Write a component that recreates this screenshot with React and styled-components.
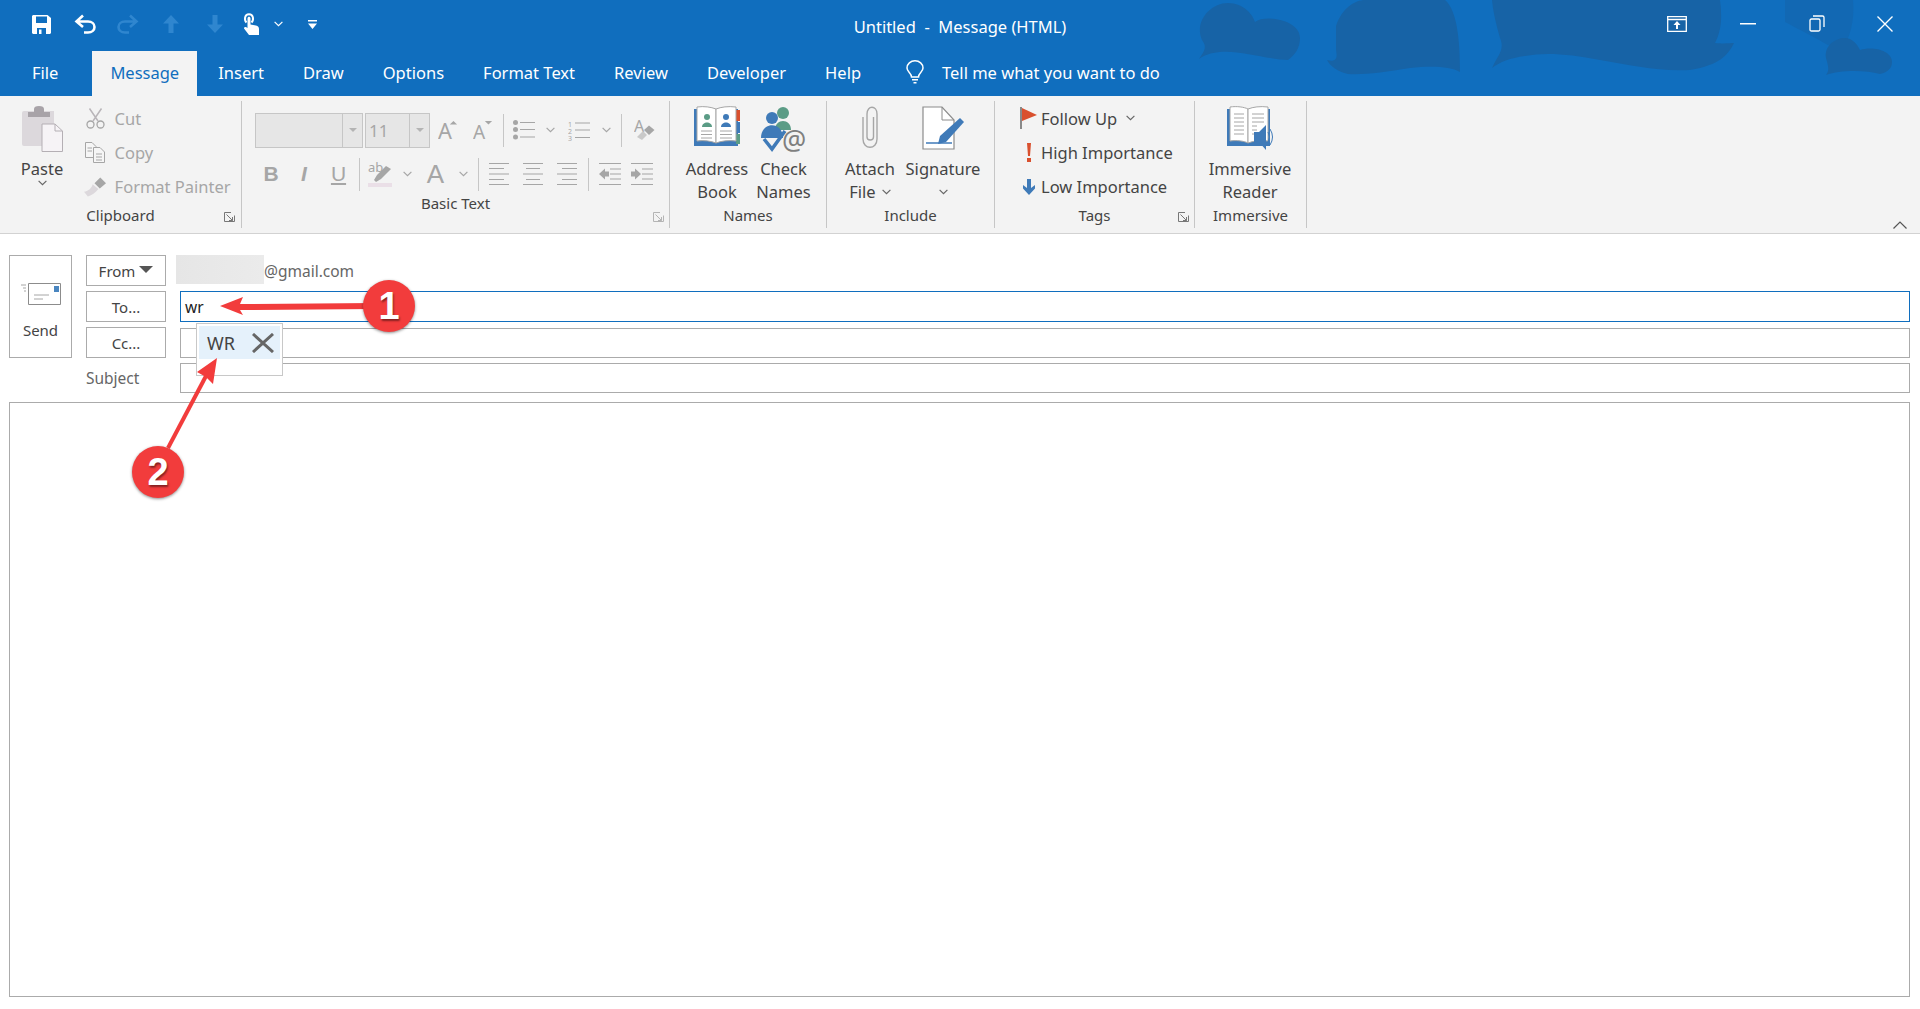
import styled, { createGlobalStyle } from "styled-components";

const GlobalStyle = createGlobalStyle`
  html, body { margin: 0; padding: 0; height: 100%; }
  body { font-family: "Noto Sans", "Open Sans", sans-serif; background: #fff; color: #333; overflow: hidden; }
  #root { height: 100%; }
`;

const Window = styled.div`
  position: relative;
  display: flex;
  flex-direction: column;
  height: 1009px;
  width: 1920px;
  overflow: hidden;
`;

const Header = styled.header`
  position: relative;
  height: 96px;
  background: #106ebe;
  color: #fff;
  flex: none;
`;

const Clouds = styled.svg`
  position: absolute;
  top: 0;
  right: 0;
`;

const TitleRow = styled.div`
  position: relative;
  height: 51px;
  display: grid;
  grid-template-columns: 1fr auto 1fr;
  align-items: center;
`;

const Qat = styled.div`
  display: flex;
  align-items: center;
  padding-left: 32px;
  margin-top: -3px;
`;

const QatSlot = styled.span`
  display: inline-flex;
  justify-content: flex-start;
  width: ${(p) => p.$w}px;
`;

const Title = styled.div`
  font-size: 16.5px;
  white-space: pre;
  margin-top: 1px;
`;

const WinButtons = styled.div`
  display: flex;
  justify-content: flex-end;
  align-items: center;
  padding-right: 27px;
  margin-top: -4px;
`;

const WinSlot = styled.span`
  display: inline-flex;
  justify-content: flex-end;
  width: ${(p) => p.$w}px;
`;

const TabRow = styled.nav`
  position: relative;
  display: flex;
  align-items: stretch;
  height: 45px;
  padding-left: 14px;
  gap: 3px;
`;

const Tab = styled.div`
  display: flex;
  align-items: center;
  padding: 0 18px 3px;
  font-size: 16.5px;
  margin-right: ${(p) => p.$mr || 0}px;
  background: ${(p) => (p.$active ? "#f3f3f3" : "transparent")};
  color: ${(p) => (p.$active ? "#106ebe" : "#fff")};
`;

const TellMe = styled.div`
  display: flex;
  align-items: center;
  gap: 17px;
  font-size: 16.5px;
  padding: 0 0 3px 23px;
`;

const Ribbon = styled.section`
  position: relative;
  display: flex;
  flex: none;
  height: 138px;
  padding-top: 5px;
  box-sizing: border-box;
  background: #f3f3f3;
  border-bottom: 1px solid #d2d2d2;
`;

const Group = styled.div`
  position: relative;
  width: ${(p) => p.$w}px;
  box-sizing: border-box;
  height: 127px;
  display: flex;
  flex-direction: column;
  border-right: 1px solid #c6c6c6;
`;

const GroupBody = styled.div`
  flex: 1;
  display: flex;
  padding: ${(p) => p.$pad || "0"};
  min-height: 0;
`;

const GroupLabel = styled.div`
  height: 24px;
  line-height: 22px;
  text-align: center;
  font-size: 15px;
  color: #444;
`;

const Launcher = styled.svg`
  position: absolute;
  right: ${(p) => p.$r || 5}px;
  bottom: 1px;
`;

const LargeButton = styled.div`
  width: ${(p) => p.$w}px;
  display: flex;
  flex-direction: column;
  align-items: center;
  padding-top: 5px;
  font-size: 16.5px;
  line-height: 23px;
  color: #444;
`;

const LargeIcon = styled.div`
  height: 50px;
  margin-bottom: 1px;
  display: flex;
  align-items: flex-start;
`;

const Caption = styled.span`
  display: inline-flex;
  align-items: center;
  gap: 6px;
  white-space: nowrap;
`;

const SmallColumn = styled.div`
  display: flex;
  flex-direction: column;
  padding-left: ${(p) => p.$pl || 0}px;
`;

const SmallButton = styled.div`
  height: 35px;
  display: flex;
  align-items: center;
  font-size: 16.5px;
  white-space: nowrap;
  color: ${(p) => (p.$off ? "#a6a6a6" : "#444")};
`;

const SmallIcon = styled.span`
  display: inline-flex;
  justify-content: center;
  width: ${(p) => p.$w}px;
  flex: none;
`;

const TextRows = styled.div`
  display: flex;
  flex-direction: column;
  gap: 8px;
  padding: 11px 0 0 13px;
`;

const ToolRow = styled.div`
  display: flex;
  align-items: center;
  height: 36px;
`;

const Tool = styled.span`
  display: inline-flex;
  align-items: center;
  justify-content: center;
  width: ${(p) => p.$w}px;
  height: 100%;
  color: #a6a6a6;
`;

const ToolSep = styled.span`
  display: block;
  width: 1px;
  height: 33px;
  background: #c6c6c6;
`;

const Combo = styled.div`
  display: flex;
  box-sizing: border-box;
  width: ${(p) => p.$w}px;
  height: 35px;
  margin-right: ${(p) => p.$mr || 0}px;
  background: #e6e6e6;
  border: 1px solid #c6c6c6;
  color: #a6a6a6;
  font-size: 17px;
`;

const ComboValue = styled.span`
  flex: 1;
  padding-left: 3px;
  line-height: 33px;
`;

const ComboArrow = styled.span`
  width: 19px;
  display: flex;
  align-items: center;
  justify-content: center;
  border-left: 1px solid #c6c6c6;
  &::after {
    content: "";
    border: 4px solid transparent;
    border-top: 4px solid #b4b4b4;
    margin-top: 4px;
  }
`;

const Collapse = styled.svg`
  position: absolute;
  right: 13px;
  bottom: 4px;
`;

const Compose = styled.main`
  flex: 1;
  display: flex;
  flex-direction: column;
  padding: 21px 10px 12px 9px;
  min-height: 0;
  background: #fff;
  position: relative;
`;

const Fields = styled.div`
  display: grid;
  grid-template-columns: 63px 80px 1fr;
  grid-template-rows: 31px 31px 31px 30px;
  column-gap: 14px;
  row-gap: 5px;
`;

const SendButton = styled.div`
  grid-row: 1 / span 3;
  box-sizing: border-box;
  border: 1px solid #ababab;
  display: flex;
  flex-direction: column;
  align-items: center;
  padding-top: 27px;
  gap: 15px;
  font-size: 15px;
  color: #444;
`;

const FieldButton = styled.div`
  box-sizing: border-box;
  border: 1px solid #ababab;
  display: flex;
  align-items: center;
  justify-content: center;
  gap: 4px;
  font-size: 15px;
  color: #444;
`;

const FromCaret = styled.span`
  width: 0;
  height: 0;
  margin-top: -3px;
  border: 7px solid transparent;
  border-bottom: none;
  border-top: 7px solid #555;
`;

const FromValue = styled.div`
  display: flex;
  align-items: center;
  margin-left: -4px;
  font-size: 15.5px;
  color: #666;
`;

const Redacted = styled.span`
  width: 88px;
  height: 29px;
  margin-top: -2px;
  background: linear-gradient(90deg, #e6e6e6, #ebebeb);
`;

const Input = styled.div`
  box-sizing: border-box;
  margin-top: ${(p) => p.$mt || 0}px;
  border: 1px solid ${(p) => (p.$focus ? "#106ebe" : "#ababab")};
  display: flex;
  align-items: center;
  padding-left: 4px;
  font-size: 15.5px;
  color: #222;
`;

const SubjectLabel = styled.div`
  display: flex;
  align-items: center;
  font-size: 15.5px;
  color: #666;
`;

const Body = styled.div`
  flex: 1;
  margin-top: 9px;
  border: 1px solid #ababab;
`;

const Suggest = styled.div`
  position: absolute;
  left: 196px;
  top: 89px;
  box-sizing: border-box;
  width: 87px;
  height: 53px;
  padding: 2px;
  background: #fff;
  border: 1px solid #c8c8c8;
`;

const SuggestRow = styled.div`
  height: 33px;
  display: flex;
  align-items: center;
  justify-content: space-between;
  padding: 0 6px 0 8px;
  background: #e5f1fb;
  font-size: 18px;
  color: #444;
`;

const Annotations = styled.svg`
  position: absolute;
  left: 0;
  top: 0;
  pointer-events: none;
`;

const Badge = styled.div`
  position: absolute;
  left: ${(p) => p.$x - 26}px;
  top: ${(p) => p.$y - 26}px;
  width: 52px;
  height: 52px;
  border-radius: 50%;
  background: #f23c3c;
  box-shadow: 0 1px 3px rgba(0, 0, 0, 0.45);
  color: #fff;
  font: bold 38px/52px "Liberation Sans", sans-serif;
  text-align: center;
  text-shadow: 1px 2px 2px rgba(0, 0, 0, 0.45);
`;

const SaveIcon = () => (
  <svg width="19" height="19" viewBox="0 0 19 19">
    <path fill="#fff" d="M0 1 1 0H15.500L19 3V18L18 19H1L0 18Z" />
    <path fill="#106ebe" d="M4 1.500H15V8H4ZM5 13H14V19H5Z" />
    <path fill="#fff" d="M7 14.500H9.500V19H7Z" />
  </svg>
);

const UndoIcon = ({ color = "#fff", flip }) => (
  <svg width="22" height="20" viewBox="0 0 22 20" style={flip ? { transform: "scaleX(-1)" } : undefined}>
    <path fill="none" stroke={color} strokeWidth="2.6" d="M9 1.500 2.500 7.500 9 13M2.500 7.500H14C18 7.500 20.500 10 20.500 13S18 18.500 14 18.500H10" />
  </svg>
);

const ArrowIcon = ({ down }) => (
  <svg width="16" height="18" viewBox="0 0 16 18" style={down ? { transform: "scaleY(-1)" } : undefined}>
    <path fill="#2f86cf" d="M8 0 16 8.500H10.500V18H5.500V8.500H0Z" />
  </svg>
);

const TouchIcon = () => (
  <svg width="16" height="22" viewBox="0 0 16 22">
    <path fill="none" stroke="#fff" strokeWidth="2" d="M3.500 9.500C1 7 1.500 1.200 6 1.200S11 7 8.500 9.500" />
    <path fill="#fff" d="M4.500 5.500C4.500 3.300 7.500 3.300 7.500 5.500V11.500L13 12.500C15 13 16 14 16 16V22H6L1 15.500C1 13.500 3 13.500 4.500 15Z" />
  </svg>
);

const Chevron = ({ color = "#666", w = 9 }) => (
  <svg width={w} height="6" viewBox="0 0 9 6">
    <path fill="none" stroke={color} strokeWidth="1.200" d="M.6.8 4.500 4.700 8.400.8" />
  </svg>
);

const CustomizeIcon = () => (
  <svg width="9" height="9" viewBox="0 0 9 9">
    <path fill="#fff" d="M0 0H9V1.500H0ZM0 3.500H9L4.500 9Z" />
  </svg>
);

const PinRibbonIcon = () => (
  <svg width="20" height="16" viewBox="0 0 20 16">
    <path fill="none" stroke="#fff" strokeWidth="1.300" d="M.7.7H19.300V15.300H.7ZM.7 3.500H19.300" />
    <path fill="#fff" d="M10 5 13.500 9H11V13H9V9H6.500Z" />
  </svg>
);

const MinimizeIcon = () => (
  <svg width="16" height="2" viewBox="0 0 16 2">
    <path fill="#fff" d="M0 0H16V1.500H0Z" />
  </svg>
);

const RestoreIcon = () => (
  <svg width="16" height="17" viewBox="0 0 16 17">
    <path fill="none" stroke="#fff" strokeWidth="1.300" d="M1 5.500Q1 4 2.500 4H9.500Q11 4 11 5.500V14.500Q11 16 9.500 16H2.500Q1 16 1 14.500ZM4 1H13.500Q15 1 15 2.500V12" />
  </svg>
);

const CloseIcon = () => (
  <svg width="16" height="16" viewBox="0 0 16 16">
    <path stroke="#fff" strokeWidth="1.400" d="M.5.5 15.500 15.500M15.500.5.5 15.500" />
  </svg>
);

const BulbIcon = () => (
  <svg width="20" height="24" viewBox="0 0 20 24">
    <path fill="none" stroke="#fff" strokeWidth="1.500" d="M6.500 17C6.500 13 2 12 2 8A8 7.200 0 0 1 18 8C18 12 13.500 13 13.500 17ZM7 19.800H13M8.500 22.800H11.500" />
  </svg>
);

const PasteIcon = () => (
  <svg width="41" height="46" viewBox="0 0 41 46">
    <path fill="#dcd8dc" d="M2 5H32V40H2Q0 40 0 38V7Q0 5 2 5Z" />
    <path fill="#a8a3a8" d="M6 6 12 6V3Q12 0 17 0T22 3V6H28V11H6Z" />
    <path fill="#f6f3f6" stroke="#b4afb4" d="M20 18H33L40.500 25V45.500H20Z" />
    <path fill="none" stroke="#b4afb4" d="M33 18V25H40.500" />
  </svg>
);

const CutIcon = () => (
  <svg width="19" height="21" viewBox="0 0 19 21">
    <path fill="none" stroke="#b9b5b9" strokeWidth="1.500" d="M3.500.5 12 13M15.500.5 7 13" />
    <circle cx="4.500" cy="16.500" r="3.500" fill="none" stroke="#a6a6a6" strokeWidth="1.300" />
    <circle cx="14.500" cy="16.500" r="3.500" fill="none" stroke="#a6a6a6" strokeWidth="1.300" />
  </svg>
);

const CopyIcon = () => (
  <svg width="20" height="21" viewBox="0 0 20 21">
    <path fill="#f6f6f6" stroke="#a6a6a6" d="M.5.5H7L11 4.500V15.500H.5Z" />
    <path fill="#f6f6f6" stroke="#a6a6a6" d="M8.500 5.500H15L19.500 10V20.500H8.500Z" />
    <path stroke="#a6a6a6" d="M2.500 6H7M2.500 9H7M11 12H17M11 15H17M11 18H17" />
  </svg>
);

const BrushIcon = () => (
  <svg width="23" height="20" viewBox="0 0 23 20">
    <path fill="#dcd8dc" d="M0 15C5 14 8 11 9 7L15 12C12 16 7 19 4 20Z" />
    <path fill="#a6a6a6" d="M11 6 17 0 23 6 16.500 11.500Z" />
  </svg>
);

const GrowFont = ({ size = 24, up = true, w = 20 }) => (
  <svg width={w} height="20" viewBox="0 0 22 22">
    <text x="0" y="21" fontFamily="Noto Sans" fontSize={size} fill="#a6a6a6">A</text>
    <path fill="#a6a6a6" d={up ? "M17 1 21 5H13Z" : "M13 1H21L17 5Z"} />
  </svg>
);

const BulletsIcon = () => (
  <svg width="22" height="20" viewBox="0 0 22 20">
    <circle cx="2.500" cy="2.500" r="2.500" fill="#a6a6a6" />
    <circle cx="2.500" cy="9.500" r="2.500" fill="#a6a6a6" />
    <circle cx="2.500" cy="17" r="2.500" fill="#a6a6a6" />
    <path stroke="#a6a6a6" strokeWidth="1.200" d="M7 2.500H22M7 9.500H22M7 17H22" />
  </svg>
);

const NumbersIcon = () => (
  <svg width="22" height="21" viewBox="0 0 22 21">
    <text x="0" y="6.500" fontSize="7" fontFamily="Noto Sans" fill="#a6a6a6">1</text>
    <text x="0" y="13.500" fontSize="7" fontFamily="Noto Sans" fill="#a6a6a6">2</text>
    <text x="0" y="20.500" fontSize="7" fontFamily="Noto Sans" fill="#a6a6a6">3</text>
    <path stroke="#a6a6a6" strokeWidth="1.200" d="M7 3H22M7 10H22M7 17.500H22" />
  </svg>
);

const ClearIcon = () => (
  <svg width="21" height="22" viewBox="0 0 21 22">
    <text x="0" y="13" fontSize="16" fontFamily="Noto Sans" fill="#a6a6a6">A</text>
    <path fill="#c9c9c9" d="M3 18 9 12 13 16 8 21Z" />
    <path fill="#a6a6a6" d="M10 11 15 6.500 20.500 11 15 16Z" />
  </svg>
);

const BoldGlyph = styled.span`
  font: ${(p) => (p.$i ? "italic" : "normal")} ${(p) => (p.$b ? 700 : 400)} ${(p) => p.$s || 21}px "Liberation Sans", sans-serif;
  text-decoration: ${(p) => (p.$u ? "underline" : "none")};
  text-underline-offset: 2px;
  color: #a6a6a6;
`;

const HighlightIcon = () => (
  <svg width="24" height="25" viewBox="0 0 24 25">
    <text x="0" y="10" fontSize="13" fontFamily="Noto Sans" fill="#a6a6a6">ab</text>
    <path fill="#a6a6a6" d="M6 18 9 13 18 4 23 7 13 17 8 20Z" />
    <path fill="#eadfe7" d="M0 21H24V25H0Z" />
  </svg>
);

const AlignIcon = ({ mode }) => {
  const short = { left: "M0 5.500H15M0 16.500H15", center: "M3 5.500H17M3 16.500H17", right: "M5 5.500H20M5 16.500H20" }[mode];
  return (
    <svg width="20" height="22" viewBox="0 0 20 22">
      <path stroke="#a6a6a6" strokeWidth="1.200" d="M0 .5H20M0 11H20M0 21.500H20" />
      <path stroke="#a6a6a6" strokeWidth="1.200" d={short} />
    </svg>
  );
};

const IndentIcon = ({ out }) => (
  <svg width="22" height="22" viewBox="0 0 22 22">
    <path stroke="#a6a6a6" strokeWidth="1.200" d="M0 .5H22M0 21.500H22M11 6H22M11 11H22M11 16H22" />
    <path fill="#a6a6a6" d={out ? "M0 11 6 5.500V8.500H10V13.500H6V16.500Z" : "M10 11 4 5.500V8.500H0V13.500H4V16.500Z"} />
  </svg>
);

const LauncherIcon = ({ color }) => (
  <svg width="11" height="10" viewBox="0 0 11 10">
    <path fill="none" stroke={color} d="M10.500 3.500V9.500H.5V.5H7M2.500 2.500 8.500 8.500M5 8.500H8.500V5" />
  </svg>
);

const BookIcon = () => (
  <svg width="46" height="40" viewBox="0 0 46 40">
    <path fill="#3f7ab8" d="M0 3H44V40H0Z" />
    <path fill="#d9502e" d="M42 4H46V15H42Z" />
    <path fill="#3f7ab8" d="M42 16H46V27H42Z" />
    <path fill="#5b9c86" d="M42 28H46V38H42Z" />
    <path fill="#fff" stroke="#a6a6a6" d="M3 1C10 0 17 1 22 3V37C17 35 10 34 3 35Z" />
    <path fill="#fff" stroke="#a6a6a6" d="M22 3C27 1 34 0 42 1V35C34 34 27 35 22 37Z" />
    <circle cx="13" cy="11" r="3" fill="#5b9c86" />
    <path fill="#5b9c86" d="M8 21C8 15 18 15 18 21Z" />
    <circle cx="32" cy="11" r="3" fill="#3f7ab8" />
    <path fill="#3f7ab8" d="M27 21C27 15 37 15 37 21Z" />
    <path stroke="#a6a6a6" d="M7 25H18M7 28.500H18M7 32H18M26 25H38M26 28.500H38M26 32H38" />
  </svg>
);

const CheckNamesIcon = () => (
  <svg width="46" height="46" viewBox="0 0 46 46">
    <circle cx="22" cy="7" r="6" fill="#5b9c86" />
    <path fill="#5b9c86" d="M14 24C14 12 30 12 30 24Z" />
    <circle cx="11" cy="12" r="6" fill="#3f7ab8" />
    <path fill="#3f7ab8" d="M0 32C0 15 22 15 22 32Z" />
    <path fill="none" stroke="#3f7ab8" strokeWidth="3.500" d="M3 33 11 43 24 25" />
    <text x="21" y="44" fontSize="27" fontFamily="Noto Sans" fill="#7f7f7f">@</text>
  </svg>
);

const ClipIcon = () => (
  <svg width="16" height="42" viewBox="0 0 16 42">
    <path fill="none" stroke="#a6a6a6" strokeWidth="1.400" d="M11.500 11V31C11.500 35 5 35 5 31V8C5 -1 15 -1 15 8V33C15 44 1 44 1 33V11" />
  </svg>
);

const SignatureIcon = () => (
  <svg width="42" height="44" viewBox="0 0 42 44">
    <path fill="#fff" stroke="#8c8c8c" strokeWidth="1.200" d="M1 1H20L32 14V43H1Z" />
    <path fill="none" stroke="#8c8c8c" d="M20 1V14H32" />
    <path fill="#3f7ab8" d="M38 12 42 16 24 36 16 38 18 30Z" />
    <path stroke="#3f7ab8" strokeWidth="1.500" d="M4 37H30" />
  </svg>
);

const ReaderIcon = () => (
  <svg width="47" height="44" viewBox="0 0 47 44">
    <path fill="#3f7ab8" d="M0 3H43V40H0Z" />
    <path fill="#fff" stroke="#a6a6a6" d="M3 1C10 0 17 1 21 3V37C17 35 10 34 3 35Z" />
    <path fill="#fff" stroke="#a6a6a6" d="M21 3C26 1 33 0 41 1V35C33 34 26 35 21 37Z" />
    <path stroke="#a6a6a6" d="M7 8H17M7 12H17M7 16H17M7 20H17M7 24H17M7 28H17M25 8H37M25 12H37M25 16H37M25 20H30M25 24H30M25 28H30" />
    <path fill="#3f7ab8" d="M27 26H32L39 19V44L32 36H27Z" />
    <path fill="none" stroke="#3f7ab8" d="M41 26Q44 31 41 36M43 23Q48 31 43 39" />
  </svg>
);

const FlagIcon = () => (
  <svg width="17" height="22" viewBox="0 0 17 22">
    <path stroke="#666" strokeWidth="1.500" d="M1 0V22" />
    <path fill="#d9502e" d="M2 1 17 8 2 14Z" />
  </svg>
);

const BangIcon = () => (
  <svg width="6" height="19" viewBox="0 0 6 19">
    <path fill="#d9502e" d="M1 0H5L4 13H2ZM1 15H5V19H1Z" />
  </svg>
);

const LowIcon = () => (
  <svg width="12" height="16" viewBox="0 0 12 16">
    <path fill="#3f7ab8" d="M4 0H8V9L12 6V9.500L6 16 0 9.500V6L4 9Z" />
  </svg>
);

const SendIcon = () => (
  <svg width="40" height="22" viewBox="0 0 40 22">
    <path fill="#fff" stroke="#8c8c8c" d="M7.500.5H39.500V21.500H7.500Z" />
    <path fill="#4a86c0" d="M33 3H38V9H33Z" />
    <path stroke="#a6a6a6" d="M0 2H5M2 5H5M3 8H5M13 12H28M13 16H22" />
  </svg>
);

const App = () => (
  <Window>
    <GlobalStyle />
    <Header>
      <Clouds width="760" height="96" viewBox="0 0 760 96">
        <path fill="#1268b3" d="M625 0H693C695 20 690 40 680 52 660 40 640 30 625 22Z" />
        <g fill="#1763a6">
          <path d="M39 59C45 50 47 47 42 40 34 22 50 3 68 3 84 3 93 15 95 22 105 14 140 20 140 38 140 48 135 55 128 60 110 60 80 50 60 52 50 53 45 55 39 59Z" />
          <path d="M176 26C182 8 195 0 205 0H285C297 10 300 40 300 72 290 66 270 66 250 68 225 72 205 75 188 74 178 72 170 66 167 60 175 62 178 60 176 50Z" />
          <path d="M332 68C338 55 345 50 340 38 335 20 333 10 332 0H560C562 15 562 30 555 43 565 44 570 43 574 43 568 55 560 65 530 70 500 72 470 65 440 60 410 54 385 52 365 56 350 58 340 62 332 68Z" />
          <path d="M666 75C670 70 668 66 666 58 664 46 675 38 685 38 692 38 697 44 700 50 712 46 732 50 732 62 732 68 728 72 720 74 705 70 680 70 666 75Z" />
        </g>
      </Clouds>
      <TitleRow>
        <Qat>
          <QatSlot $w={42}><SaveIcon /></QatSlot>
          <QatSlot $w={43}><UndoIcon /></QatSlot>
          <QatSlot $w={46}><UndoIcon color="#2f86cf" flip /></QatSlot>
          <QatSlot $w={44}><ArrowIcon /></QatSlot>
          <QatSlot $w={36}><ArrowIcon down /></QatSlot>
          <QatSlot $w={31}><TouchIcon /></QatSlot>
          <QatSlot $w={34}><Chevron color="#fff" /></QatSlot>
          <QatSlot $w={9}><CustomizeIcon /></QatSlot>
        </Qat>
        <Title>Untitled  -  Message (HTML)</Title>
        <WinButtons>
          <WinSlot $w={20}><PinRibbonIcon /></WinSlot>
          <WinSlot $w={69}><MinimizeIcon /></WinSlot>
          <WinSlot $w={69}><RestoreIcon /></WinSlot>
          <WinSlot $w={68}><CloseIcon /></WinSlot>
        </WinButtons>
      </TitleRow>
      <TabRow>
        <Tab $mr={13}>File</Tab>
        <Tab $active>Message</Tab>
        <Tab>Insert</Tab>
        <Tab>Draw</Tab>
        <Tab>Options</Tab>
        <Tab>Format Text</Tab>
        <Tab>Review</Tab>
        <Tab>Developer</Tab>
        <Tab>Help</Tab>
        <TellMe><BulbIcon />Tell me what you want to do</TellMe>
      </TabRow>
    </Header>

    <Ribbon>
      <Group $w={242}>
        <GroupBody>
          <LargeButton $w={84}>
            <LargeIcon><PasteIcon /></LargeIcon>
            <Caption>Paste</Caption>
            <Chevron />
          </LargeButton>
          <SmallColumn>
            <SmallButton $off><SmallIcon $w={22}><CutIcon /></SmallIcon>&nbsp;&nbsp;Cut</SmallButton>
            <SmallButton $off><SmallIcon $w={22}><CopyIcon /></SmallIcon>&nbsp;&nbsp;Copy</SmallButton>
            <SmallButton $off><SmallIcon $w={22}><BrushIcon /></SmallIcon>&nbsp;&nbsp;Format Painter</SmallButton>
          </SmallColumn>
        </GroupBody>
        <GroupLabel>Clipboard</GroupLabel>
        <Launcher as="span" $r={6}><LauncherIcon color="#777" /></Launcher>
      </Group>
      <Group $w={428}>
        <TextRows>
          <ToolRow>
            <Combo $w={108} $mr={2}><ComboValue /><ComboArrow /></Combo>
            <Combo $w={65}><ComboValue>11</ComboValue><ComboArrow /></Combo>
            <Tool $w={36}><GrowFont /></Tool>
            <Tool $w={34}><GrowFont size={21} up={false} /></Tool>
            <Tool $w={6}><ToolSep /></Tool>
            <Tool $w={35}><BulletsIcon /></Tool>
            <Tool $w={18}><Chevron color="#a6a6a6" /></Tool>
            <Tool $w={39}><NumbersIcon /></Tool>
            <Tool $w={16}><Chevron color="#a6a6a6" /></Tool>
            <Tool $w={14}><ToolSep /></Tool>
            <Tool $w={33}><ClearIcon /></Tool>
          </ToolRow>
          <ToolRow>
            <Tool $w={32}><BoldGlyph $b>B</BoldGlyph></Tool>
            <Tool $w={34}><BoldGlyph $i $b>I</BoldGlyph></Tool>
            <Tool $w={35}><BoldGlyph $u>U</BoldGlyph></Tool>
            <Tool $w={6}><ToolSep /></Tool>
            <Tool $w={36}><HighlightIcon /></Tool>
            <Tool $w={18}><Chevron color="#a6a6a6" /></Tool>
            <Tool $w={39}><BoldGlyph $s={26}>A</BoldGlyph></Tool>
            <Tool $w={16}><Chevron color="#a6a6a6" /></Tool>
            <Tool $w={14}><ToolSep /></Tool>
            <Tool $w={28}><AlignIcon mode="left" /></Tool>
            <Tool $w={40}><AlignIcon mode="center" /></Tool>
            <Tool $w={28}><AlignIcon mode="right" /></Tool>
            <Tool $w={14}><ToolSep /></Tool>
            <Tool $w={30}><IndentIcon out /></Tool>
            <Tool $w={34}><IndentIcon /></Tool>
          </ToolRow>
        </TextRows>
        <GroupLabel>Basic Text</GroupLabel>
        <Launcher as="span"><LauncherIcon color="#b4b4b4" /></Launcher>
      </Group>
      <Group $w={157}>
        <GroupBody $pad="0 0 0 14px">
          <LargeButton $w={66}>
            <LargeIcon><BookIcon /></LargeIcon>
            <Caption>Address</Caption>
            <Caption>Book</Caption>
          </LargeButton>
          <LargeButton $w={67}>
            <LargeIcon><CheckNamesIcon /></LargeIcon>
            <Caption>Check</Caption>
            <Caption>Names</Caption>
          </LargeButton>
        </GroupBody>
        <GroupLabel>Names</GroupLabel>
      </Group>
      <Group $w={168}>
        <GroupBody $pad="0 0 0 14px">
          <LargeButton $w={58}>
            <LargeIcon><ClipIcon /></LargeIcon>
            <Caption>Attach</Caption>
            <Caption>File <Chevron /></Caption>
          </LargeButton>
          <LargeButton $w={88}>
            <LargeIcon><SignatureIcon /></LargeIcon>
            <Caption>Signature</Caption>
            <Caption as="span" style={{ height: 23 }}><Chevron /></Caption>
          </LargeButton>
        </GroupBody>
        <GroupLabel>Include</GroupLabel>
      </Group>
      <Group $w={200}>
        <GroupBody>
          <SmallColumn $pl={21}>
            <SmallButton><SmallIcon $w={25}><FlagIcon /></SmallIcon>Follow Up&nbsp;&nbsp;<Chevron /></SmallButton>
            <SmallButton><SmallIcon $w={25}><BangIcon /></SmallIcon>High Importance</SmallButton>
            <SmallButton><SmallIcon $w={25}><LowIcon /></SmallIcon>Low Importance</SmallButton>
          </SmallColumn>
        </GroupBody>
        <GroupLabel>Tags</GroupLabel>
        <Launcher as="span"><LauncherIcon color="#777" /></Launcher>
      </Group>
      <Group $w={112}>
        <GroupBody $pad="0 0 0 5px">
          <LargeButton $w={100}>
            <LargeIcon><ReaderIcon /></LargeIcon>
            <Caption>Immersive</Caption>
            <Caption>Reader</Caption>
          </LargeButton>
        </GroupBody>
        <GroupLabel>Immersive</GroupLabel>
      </Group>
      <Collapse width="14" height="8" viewBox="0 0 14 8">
        <path fill="none" stroke="#555" strokeWidth="1.200" d="M.5 7.500 7 1 13.500 7.500" />
      </Collapse>
    </Ribbon>

    <Compose>
      <Fields>
        <SendButton><SendIcon />Send</SendButton>
        <FieldButton>From <FromCaret /></FieldButton>
        <FromValue><Redacted />@gmail.com</FromValue>
        <FieldButton style={{ gridColumn: 2 }}>To...</FieldButton>
        <Input $focus>wr</Input>
        <FieldButton style={{ gridColumn: 2 }}>Cc...</FieldButton>
        <Input $mt={1} />
        <SubjectLabel style={{ gridColumn: 2 }}>Subject</SubjectLabel>
        <Input />
      </Fields>
      <Body />
      <Suggest>
        <SuggestRow>
          WR
          <svg width="22" height="20" viewBox="0 0 22 20">
            <path stroke="#666" strokeWidth="3" d="M1 1 21 19M21 1 1 19" />
          </svg>
        </SuggestRow>
      </Suggest>
    </Compose>

    <Annotations width="1920" height="1009" viewBox="0 0 1920 1009">
      <path fill="#f23c3c" d="M220 306 243 297 240 304 375 303V309L240 310 243 315Z" />
      <path fill="#f23c3c" stroke="#f23c3c" strokeWidth="4" d="M168 448 206 376" />
      <path fill="#f23c3c" d="M217 358 213 384 206 377 197 372Z" />
    </Annotations>
    <Badge $x={389} $y={306}>1</Badge>
    <Badge $x={158} $y={472}>2</Badge>
  </Window>
);

export default App;
